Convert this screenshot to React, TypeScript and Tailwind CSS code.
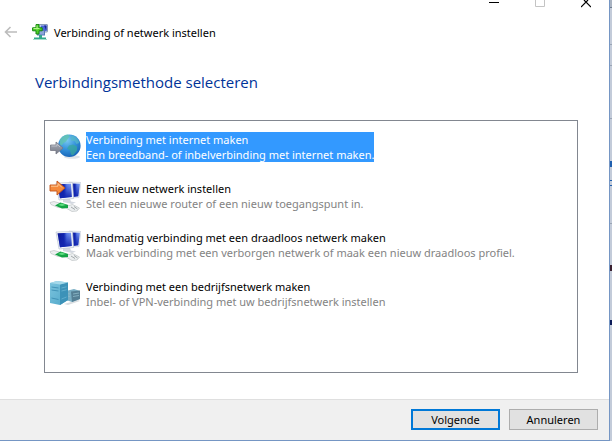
import { useState } from "react"
import clsx from "clsx"

function SetupIcon() {
  return (
    <svg className="size-4 shrink-0" viewBox="0 0 16 16" aria-hidden="true">
      <rect x="6.5" y="0.5" width="9" height="7.5" rx="0.5" fill="#c3d2ea" stroke="#8a9bb8" />
      <path d="M9 1.5h5.5V7H8z" fill="#4a66d8" />
      <path d="M12 1.5h2.5V7z" fill="#16249a" />
      <rect x="5.5" y="6.5" width="7" height="4.5" fill="#8ea6d8" stroke="#5a78b8" />
      <path d="M7 11h3v2.5h4V15H2v-1.500h5z" fill="#33a88c" />
      <path d="M1 15.500h14" stroke="#a5dccb" />
      <path d="M4 .6h3v3.200h3.200v3H7V10H4V6.800H.6v-3H4z" fill="#4fd028" stroke="#16870f" />
      <path d="M5 1.500v4M1.500 4.500h6" stroke="#b4f58a" />
    </svg>
  )
}

function GlobeIcon() {
  return (
    <svg className="size-8 shrink-0" viewBox="0 0 32 32" aria-hidden="true">
      <defs>
        <radialGradient id="ocean" cx="0.4" cy="0.25" r="0.8">
          <stop offset="0" stopColor="#7cc8f0" />
          <stop offset="0.5" stopColor="#3594dc" />
          <stop offset="1" stopColor="#1560b4" />
        </radialGradient>
        <linearGradient id="steel" x1="0" y1="0" x2="0" y2="1">
          <stop offset="0" stopColor="#a9adb8" />
          <stop offset="1" stopColor="#767b88" />
        </linearGradient>
      </defs>
      <ellipse cx="23" cy="26" rx="8" ry="1.8" fill="#dfe3e8" />
      <circle cx="20.3" cy="14.8" r="11.3" fill="url(#ocean)" />
      <path d="M11 8.500c2-3 5-5 8-5l2 2-2 2-2 3-3 2-1 2-2-1z" fill="#62c4b0" opacity="0.8" />
      <path d="M23 4.500c4 1 6.500 4 7.500 7.500l-3 1-2-3h-3l-1-3z" fill="#59b9c6" opacity="0.7" />
      <path d="M20 14.500l4-1 4 2v4l-4 5-2-1-1-4-3-2z" fill="#38a79c" opacity="0.75" />
      <path d="M1.500 14H7v-3l7 6-7 6v-3.500H1.500z" fill="url(#steel)" stroke="#777985" strokeWidth="0.8" />
      <path d="M2.500 15H8v-2l3 3" fill="none" stroke="#c6c9d2" strokeWidth="0.8" />
    </svg>
  )
}

function Monitors() {
  return (
    <>
      <defs>
        <linearGradient id="screen" x1="0" y1="0" x2="1" y2="0">
          <stop offset="0" stopColor="#0c1690" />
          <stop offset="0.45" stopColor="#1226b0" />
          <stop offset="0.65" stopColor="#5c80ea" />
          <stop offset="1" stopColor="#86a4f4" />
        </linearGradient>
        <linearGradient id="screenLow" x1="0" y1="0" x2="0" y2="1">
          <stop offset="0" stopColor="#1226b0" stopOpacity="0" />
          <stop offset="1" stopColor="#1226b0" />
        </linearGradient>
      </defs>
      <path d="M20 2l12 .5-2 15-8 .5z" fill="#e9edf5" stroke="#c8cfda" strokeWidth="0.6" />
      <path d="M22 3.500l9 .3-1.800 12.500-5.200.4z" fill="url(#screen)" />
      <path d="M22 3.500l9 .3-1.800 12.500-5.200.4z" fill="url(#screenLow)" />
      <path d="M14 19h7l1 2.500 5 1-4 1.500-9-2z" fill="#d3d8e0" />
      <path d="M7 3l16.500-.5 1 16L10 20z" fill="#f4f6fa" stroke="#bcc5d3" strokeWidth="0.7" />
      <path d="M8.500 4.200l13.500-.4.800 13.200L11 18.300z" fill="url(#screen)" />
      <path d="M8.500 4.200l13.500-.4.800 13.200L11 18.300z" fill="url(#screenLow)" />
      <path d="M1 22.500l4-1 7 2 8 2 3.500-1 7 3.500-2.500 3-5 .5-6-3.500-8-.5-7-3z" fill="#eceff0" stroke="#b5babc" strokeWidth="0.6" />
      <path d="M6 25.500l5.500-3 7.500 2.500v3l-6 .5z" fill="#14a445" />
      <path d="M9 25l3.500-1.500 4.500 1.500-4 1z" fill="#5fdd80" />
      <path d="M22 27l4 2.500M25 26.500l3.500 2.500" stroke="#8f9698" strokeWidth="0.8" />
    </>
  )
}

function RouterIcon() {
  return (
    <svg className="size-8 shrink-0" viewBox="0 0 32 32" aria-hidden="true">
      <Monitors />
      <path d="M1 5h7V1l8 7-8 7v-4H1z" fill="#f58a3c" stroke="#c3541a" strokeWidth="0.9" />
      <path d="M2 6.200h7V3.500l4 4" fill="none" stroke="#ffd0a0" strokeWidth="0.9" />
    </svg>
  )
}

function WirelessIcon() {
  return (
    <svg className="size-8 shrink-0" viewBox="0 0 32 32" aria-hidden="true">
      <Monitors />
    </svg>
  )
}

function ServerIcon() {
  return (
    <svg className="size-8 shrink-0" viewBox="0 0 32 32" aria-hidden="true">
      <defs>
        <linearGradient id="rack" x1="0" y1="0" x2="1" y2="1">
          <stop offset="0" stopColor="#7cc4de" />
          <stop offset="1" stopColor="#4fa6c8" />
        </linearGradient>
      </defs>
      <path d="M15 26l14-4 2 1-12 4z" fill="#d9dde0" />
      <path d="M17 13l8-2 6 2v8l-8 3-6-2z" fill="#78aec4" />
      <path d="M22 13.500l9-1V21l-8 3z" fill="#547f94" />
      <path d="M18 15.500l3 .5M18 18l3 .5M24 16l6-1M24 18.500l6-1" stroke="#8fbccb" strokeWidth="0.8" />
      <path d="M1 5l7-2 11 1.500V22l-8 5-10-2z" fill="url(#rack)" />
      <path d="M11 6.500l8-2V22l-8 5z" fill="#3c92b8" />
      <path d="M1 5l7-2 11 1.500-8 2z" fill="#a5d9ea" />
      <path d="M2.500 9l7 1M2.500 12l7 1M2.500 20l7 1.500" stroke="#3d8fb3" strokeWidth="0.9" />
      <path d="M12.500 10l5-1.200M12.500 13l5-1.200M12.500 21l5-2" stroke="#68b4d2" strokeWidth="0.8" />
    </svg>
  )
}

const methods = [
  {
    icon: GlobeIcon,
    title: "Verbinding met internet maken",
    description: "Een breedband- of inbelverbinding met internet maken.",
  },
  {
    icon: RouterIcon,
    title: "Een nieuw netwerk instellen",
    description: "Stel een nieuwe router of een nieuw toegangspunt in.",
  },
  {
    icon: WirelessIcon,
    title: "Handmatig verbinding met een draadloos netwerk maken",
    description: "Maak verbinding met een verborgen netwerk of maak een nieuw draadloos profiel.",
  },
  {
    icon: ServerIcon,
    title: "Verbinding met een bedrijfsnetwerk maken",
    description: "Inbel- of VPN-verbinding met uw bedrijfsnetwerk instellen",
  },
]

function CaptionButtons() {
  return (
    <div className="flex h-4 justify-end">
      <button aria-label="Minimaliseren" className="flex w-[46px] justify-center">
        <svg width="10" height="8" viewBox="0 0 10 8">
          <path d="M0 2.500h10" stroke="#000" />
        </svg>
      </button>
      <button aria-label="Maximaliseren" disabled className="flex w-[46px] justify-center">
        <svg width="10" height="8" viewBox="0 0 10 8">
          <path d="M.5 0v6.500h9V0" fill="none" stroke="#c4c4c4" />
        </svg>
      </button>
      <button aria-label="Sluiten" className="flex w-[46px] justify-center">
        <svg width="10" height="8" viewBox="0 0 10 8">
          <path d="M0 7L7 0M10 7L3 0" stroke="#000" strokeWidth="1.2" />
        </svg>
      </button>
    </div>
  )
}

// edge of the window that lies behind the wizard
function BackgroundEdge() {
  return (
    <div className="flex w-[2px] flex-col bg-[#c3cbd9]" aria-hidden="true">
      <div className="h-2 border-b border-[#6f7d90] bg-[#a9b3c2]" />
      <div className="h-[37px] border-b border-[#9aa5b5]" />
      <div className="h-[21px] border-b border-[#9aa5b5]" />
      <div className="h-[53px] border-b border-[#9aa5b5]" />
      <div className="mt-[42px] h-[6px] bg-[#1f5fae]" />
      <div className="mt-[13px] h-[6px] border-y border-[#1f5fae]" />
      <div className="h-[38px] border-b border-[#9aa5b5]" />
      <div className="mt-[41px] h-[6px] bg-[#3a2030]" />
      <div className="mt-[49px] h-[5px] bg-[#0d1c58]" />
    </div>
  )
}

export default function App() {
  const [selected, setSelected] = useState(0)

  return (
    <div className="flex min-h-screen font-['Noto_Sans',sans-serif] text-[11px] leading-[15px] text-black">
      <div className="flex flex-1 flex-col border-r border-b border-[#7596c4] bg-white">
        <CaptionButtons />

        <header className="flex h-8 items-center pl-1">
          <button aria-label="Vorige" disabled className="mr-[14px]">
            <svg width="14" height="12" viewBox="0 0 14 12" fill="none" stroke="#bcbcbc" strokeWidth="1.6">
              <path d="M13 6H1.500M6.500 1l-5 5 5 5" />
            </svg>
          </button>
          <SetupIcon />
          <span className="ml-[6px]">Verbinding of netwerk instellen</span>
        </header>

        <main className="flex flex-1 flex-col pt-[22px] pr-[31px] pb-[26px] pl-[44px]">
          <h1 className="-ml-[9px] font-['Open_Sans',sans-serif] text-[15px] leading-6 text-[#003399]">
            Verbindingsmethode selecteren
          </h1>

          <ul
            role="listbox"
            aria-label="Verbindingsmethode"
            className="mt-[26px] flex flex-1 flex-col gap-[17px] border border-[#828790] pt-[10px] pl-1"
          >
            {methods.map(({ icon: Icon, title, description }, i) => (
              <li key={title} role="presentation">
                <button
                  role="option"
                  aria-selected={selected === i}
                  onClick={() => setSelected(i)}
                  className="flex h-8 items-center gap-[5px] text-left"
                >
                  <Icon />
                  <span className={clsx("block", selected === i && "bg-[#3399ff] text-white")}>
                    <span className="block">{title}</span>
                    <span className={clsx("block", selected !== i && "text-[#838383]")}>{description}</span>
                  </span>
                </button>
              </li>
            ))}
          </ul>
        </main>

        <footer className="flex justify-end gap-[9px] border-t border-[#dfdfdf] bg-[#f0f0f0] pt-[9px] pr-[11px] pb-[10px]">
          <button className="h-[21px] w-[89px] border-2 border-[#0078d7] bg-[#e1e1e1]">Volgende</button>
          <button className="h-[21px] w-[89px] border border-[#adadad] bg-[#e1e1e1]">Annuleren</button>
        </footer>
      </div>
      <BackgroundEdge />
    </div>
  )
}
